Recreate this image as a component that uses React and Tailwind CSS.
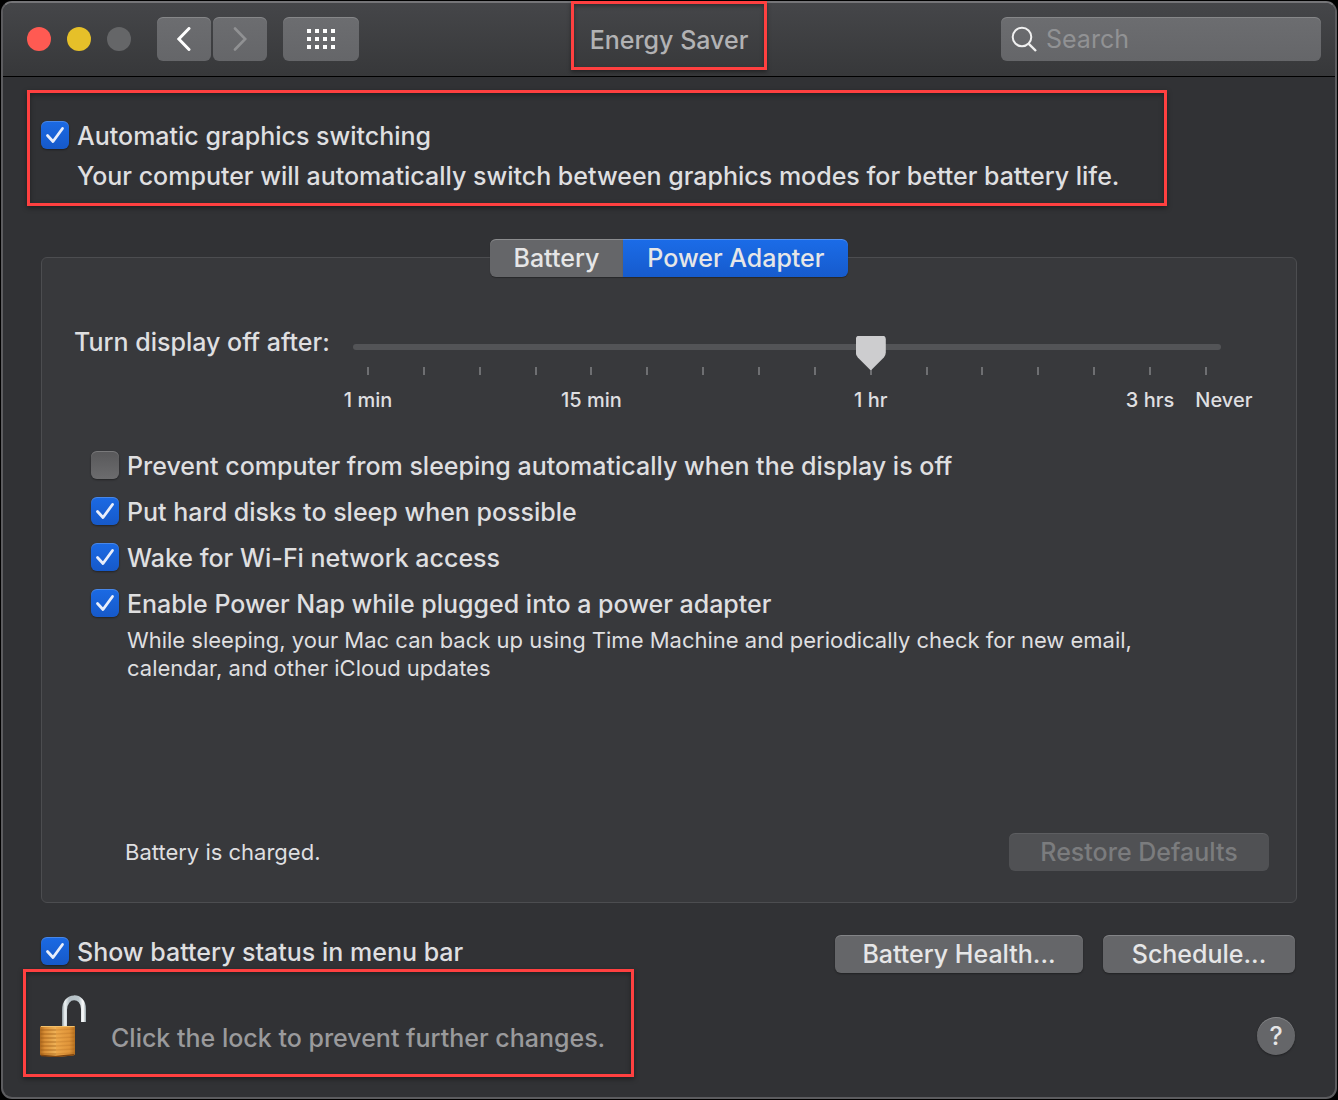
import React, { useState } from "react";

const TICKS = [
  "1 min", "", "", "", "15 min", "", "", "",
  "", "1 hr", "", "", "", "", "3 hrs", "Never",
];

function Checkbox({ label, checked, onChange }) {
  return (
    <label className="flex h-8 items-center gap-2">
      <span className="grid shrink-0">
        <input
          type="checkbox"
          checked={checked}
          onChange={(e) => onChange(e.target.checked)}
          className="
            [grid-area:1/1] size-7 appearance-none rounded-md
            bg-linear-to-b from-[#58585a] to-[#6c6c6e]
            checked:from-[#1b6ae4] checked:to-[#1659c9]
            shadow-[inset_0_1px_0_rgba(255,255,255,0.2),0_1px_2px_rgba(0,0,0,0.4)]
          "
        />
        {checked && (
          <svg viewBox="0 0 28 28" className="pointer-events-none [grid-area:1/1] z-10 size-7" fill="none">
            <path
              d="M6.5 14.5 L12 20.5 L21.5 7.5"
              stroke="#e8eefb"
              strokeWidth="2.8"
              strokeLinecap="round"
              strokeLinejoin="round"
            />
          </svg>
        )}
      </span>
      <span className="pt-[2px]">{label}</span>
    </label>
  );
}

function PushButton({ children, className, disabled }) {
  return (
    <button
      disabled={disabled}
      className={`
        h-[38px] rounded-md bg-[#656669] text-[#e6e6e7]
        shadow-[inset_0_1px_0_rgba(255,255,255,0.2),0_1px_2px_rgba(0,0,0,0.35)]
        disabled:bg-[#505154] disabled:text-[#7b7c7e]
        disabled:shadow-[inset_0_1px_0_rgba(255,255,255,0.08)]
        ${className}
      `}
    >
      {children}
    </button>
  );
}

function ToolbarButton({ label, className, children }) {
  return (
    <button
      aria-label={label}
      className={`
        flex h-11 items-center justify-center rounded-md
        bg-linear-to-b from-[#6c6d70] to-[#656669]
        shadow-[inset_0_1px_0_rgba(255,255,255,0.18)]
        ${className}
      `}
    >
      {children}
    </button>
  );
}

function Padlock() {
  const grooves = [4, 8, 12, 16, 20, 24, 28];
  return (
    <svg viewBox="0 0 46 62" className="h-[62px] w-[46px]" fill="none">
      <defs>
        <linearGradient id="shackle" x1="22" y1="0" x2="46" y2="0" gradientUnits="userSpaceOnUse">
          <stop offset="0" stopColor="#8b979c" />
          <stop offset="0.12" stopColor="#eef3f4" />
          <stop offset="0.3" stopColor="#b4bfc5" />
          <stop offset="0.7" stopColor="#b9c5ca" />
          <stop offset="0.88" stopColor="#ffffff" />
          <stop offset="1" stopColor="#96a3a8" />
        </linearGradient>
        <linearGradient id="bodyLeft" x1="0" y1="0" x2="16" y2="0" gradientUnits="userSpaceOnUse">
          <stop offset="0" stopColor="#b06a1e" />
          <stop offset="0.3" stopColor="#d98f36" />
          <stop offset="1" stopColor="#efb257" />
        </linearGradient>
        <linearGradient id="bodyRight" x1="16" y1="0" x2="35" y2="0" gradientUnits="userSpaceOnUse">
          <stop offset="0" stopColor="#eda84a" />
          <stop offset="0.7" stopColor="#e0953a" />
          <stop offset="1" stopColor="#b5701f" />
        </linearGradient>
      </defs>
      <path d="M24.5 33 V15 C24.5 -1 43.5 -1 43.5 14 V27" stroke="url(#shackle)" strokeWidth="5" />
      <g transform="translate(0 31)">
        <path d="M1 0 L16 1 V31 L1 29.5 Q0 29 0 28 V1 Z" fill="url(#bodyLeft)" />
        <path d="M16 1 L35 0 V28 Q35 29 33 29.5 L16 31 Z" fill="url(#bodyRight)" />
        {grooves.map((y) => (
          <g key={y} stroke="#9a5712" strokeWidth="1.5">
            <path d={`M0.5 ${y} H16`} strokeOpacity="0.45" />
            <path d={`M16 ${y} L34.5 ${y - 1}`} strokeOpacity="0.2" />
          </g>
        ))}
        <path d="M1 0.5 H34.5" stroke="#f3c06a" strokeWidth="1" />
        <path d="M1 29.5 L16 30.5 L34 28.8" stroke="#7d4410" strokeWidth="1.5" />
      </g>
    </svg>
  );
}

export default function App() {
  const [minutes, setMinutes] = useState(9);
  const [tab, setTab] = useState("Power Adapter");
  const [search, setSearch] = useState("");
  const [options, setOptions] = useState({
    graphics: true,
    prevent: false,
    disks: true,
    wifi: true,
    nap: true,
    menuBar: true,
  });

  const bind = (key) => ({
    checked: options[key],
    onChange: (value) => setOptions({ ...options, [key]: value }),
  });

  return (
    <div className="flex min-h-screen bg-black p-px font-['Inter','Liberation_Sans',sans-serif] text-[25px] leading-8 font-medium text-[#dfdfe0]">
      <div className="flex w-full flex-col rounded-[11px] border-2 border-[#5c5c5f] border-t-[#757578] bg-[#313235]">

        {/* TOOLBAR */}
        <header className="grid h-[74px] grid-cols-[1fr_auto_1fr] items-center rounded-t-[9px] border-b border-black bg-linear-to-b from-[#454649] to-[#37383a] px-[14px] pb-[2px]">
          <div className="flex items-center pl-[10px]">
            <div className="flex gap-4">
              <button aria-label="Close" className="size-6 rounded-full bg-[#ff5a52]" />
              <button aria-label="Minimize" className="size-6 rounded-full bg-[#e6c029]" />
              <button aria-label="Zoom" disabled className="size-6 rounded-full bg-[#656668]" />
            </div>
            <div className="ml-[26px] flex gap-[2px]">
              <ToolbarButton label="Back" className="w-[54px]">
                <svg viewBox="0 0 14 24" className="h-6 w-[14px]" fill="none" stroke="#fff" strokeWidth="3" strokeLinecap="round">
                  <path d="M12 1.5 L1.8 12 L12 22.5" />
                </svg>
              </ToolbarButton>
              <ToolbarButton label="Forward" className="w-[54px]">
                <svg viewBox="0 0 14 24" className="h-6 w-[14px]" fill="none" stroke="#909193" strokeWidth="2.6" strokeLinecap="round">
                  <path d="M2 1.5 L12.2 12 L2 22.5" />
                </svg>
              </ToolbarButton>
            </div>
            <ToolbarButton label="Show All" className="ml-4 w-[76px]">
              <svg viewBox="0 0 28 20" className="h-5 w-7" fill="#fff">
                {[0, 8, 16].map((y) =>
                  [0, 8, 16, 24].map((x) => <rect key={`${x}-${y}`} x={x} y={y} width="4" height="4" />)
                )}
              </svg>
            </ToolbarButton>
          </div>

          <h1 className="relative pt-[2px] text-[#b2b2b4]">
            Energy Saver
            <span className="absolute -inset-x-[19px] -top-[21px] h-[69px] border-3 border-[#ff4040] shadow-[0_2px_4px_rgba(0,0,0,0.4),inset_0_2px_4px_rgba(0,0,0,0.35)]" />
          </h1>

          <label className="flex h-11 w-80 items-center gap-[9px] justify-self-end rounded-md bg-linear-to-b from-[#6c6d70] to-[#656669] pl-[10px] shadow-[inset_0_1px_0_rgba(255,255,255,0.18)]">
            <svg viewBox="0 0 26 26" className="size-[26px] shrink-0" fill="none" stroke="#f0f0f0" strokeWidth="2">
              <circle cx="11" cy="11" r="9.3" />
              <path d="M17.8 17.8 L25 25" strokeWidth="2.4" />
            </svg>
            <input
              type="text"
              aria-label="Search"
              placeholder="Search"
              value={search}
              onChange={(e) => setSearch(e.target.value)}
              className="min-w-0 flex-1 bg-transparent font-normal outline-none placeholder:text-[#919294]"
            />
          </label>
        </header>

        <main className="flex flex-1 flex-col">

          {/* GRAPHICS SWITCHING */}
          <section className="mt-[13px] ml-6 w-fit border-3 border-[#ff4040] pt-[26px] pr-[45px] pb-[11px] pl-[11px] shadow-[0_2px_5px_rgba(0,0,0,0.4),inset_0_2px_5px_rgba(0,0,0,0.35)]">
            <Checkbox label="Automatic graphics switching" {...bind("graphics")} />
            <p className="mt-[9px] pl-9">
              Your computer will automatically switch between graphics modes for better battery life.
            </p>
          </section>

          {/* TABS */}
          <div role="tablist" className="relative z-10 mt-[33px] -mb-5 flex justify-center">
            {["Battery", "Power Adapter"].map((name) => (
              <button
                key={name}
                role="tab"
                aria-selected={tab === name}
                onClick={() => setTab(name)}
                className="
                  h-[38px] px-6 bg-[#656669] text-[#e6e6e7]
                  first:rounded-l-md last:rounded-r-md
                  aria-selected:bg-linear-to-b from-[#1b6ce8] to-[#165bcd]
                  shadow-[inset_0_1px_0_rgba(255,255,255,0.25),0_1px_1px_rgba(0,0,0,0.3)]
                "
              >
                {name}
              </button>
            ))}
          </div>

          {/* PANEL */}
          <section className="mx-[38px] flex flex-1 flex-col rounded-md border border-[#4c4d50] bg-[#38393c] pt-[68px] pb-[31px]">
            <div className="flex pr-[75px] pl-8">
              <label htmlFor="display-off" className="w-[279px] shrink-0">
                Turn display off after:
              </label>
              <div className="flex-1 pt-[18px]">
                <input
                  id="display-off"
                  type="range"
                  min="0"
                  max="15"
                  value={minutes}
                  onChange={(e) => setMinutes(Number(e.target.value))}
                  className="
                    relative z-10 block h-[6px] w-full appearance-none rounded-full bg-[#535457]
                    [&::-webkit-slider-thumb]:h-[35px]
                    [&::-webkit-slider-thumb]:w-[30px]
                    [&::-webkit-slider-thumb]:translate-y-[6px]
                    [&::-webkit-slider-thumb]:appearance-none
                    [&::-webkit-slider-thumb]:bg-[#cdcdcf]
                    [&::-webkit-slider-thumb]:[clip-path:path('M4_0H26Q30_0_30_4V17Q30_20_28_22L16_34Q15_35_14_34L2_22Q0_20_0_17V4Q0_0_4_0Z')]
                  "
                />
                <div className="mt-[17px] flex justify-between px-[14px] text-[20px] leading-6">
                  {TICKS.map((text, i) => (
                    <div key={i} className="flex w-[2px] flex-col items-center">
                      <span className="h-2 w-[2px] bg-[#6e6f72]" />
                      <span className="mt-[13px] h-6 whitespace-nowrap">
                        {i === 15 ? <span className="pl-9">{text}</span> : text}
                      </span>
                    </div>
                  ))}
                </div>
              </div>
            </div>

            <div className="mt-[30px] pr-[100px] pl-[49px] [&>label]:h-[46px]">
              <Checkbox label="Prevent computer from sleeping automatically when the display is off" {...bind("prevent")} />
              <Checkbox label="Put hard disks to sleep when possible" {...bind("disks")} />
              <Checkbox label="Wake for Wi-Fi network access" {...bind("wifi")} />
              <Checkbox label="Enable Power Nap while plugged into a power adapter" {...bind("nap")} />
              <p className="pl-9 text-[22px] leading-7 font-normal">
                While sleeping, your Mac can back up using Time Machine and periodically check for new email,
                calendar, and other iCloud updates
              </p>
            </div>

            <div className="mt-auto flex items-center justify-between pt-8 pr-[27px] pl-[83px]">
              <p className="text-[22px] leading-7 font-normal">Battery is charged.</p>
              <PushButton className="w-[260px]" disabled>Restore Defaults</PushButton>
            </div>
          </section>

          {/* FOOTER */}
          <footer className="mt-8 mr-10 mb-5 ml-5 flex justify-between">
            <div className="w-[611px]">
              <div className="pl-[18px]">
                <Checkbox label="Show battery status in menu bar" {...bind("menuBar")} />
              </div>
              <div className="mt-[2px] flex h-[108px] items-center border-3 border-[#ff4040] pl-[14px] shadow-[0_2px_5px_rgba(0,0,0,0.4),inset_0_2px_5px_rgba(0,0,0,0.35)]">
                <button aria-label="Lock" className="mt-[6px]">
                  <Padlock />
                </button>
                <p className="mt-[30px] ml-[25px] text-[#9a9a9c]">Click the lock to prevent further changes.</p>
              </div>
            </div>
            <div className="flex flex-col items-end gap-11">
              <div className="flex gap-5">
                <PushButton className="w-[248px]">Battery Health...</PushButton>
                <PushButton className="w-48">Schedule...</PushButton>
              </div>
              <button
                aria-label="Help"
                className="size-[38px] rounded-full bg-[#656669] text-[#e6e6e7] shadow-[inset_0_1px_0_rgba(255,255,255,0.2),0_1px_2px_rgba(0,0,0,0.35)]"
              >
                ?
              </button>
            </div>
          </footer>
        </main>
      </div>
    </div>
  );
}
